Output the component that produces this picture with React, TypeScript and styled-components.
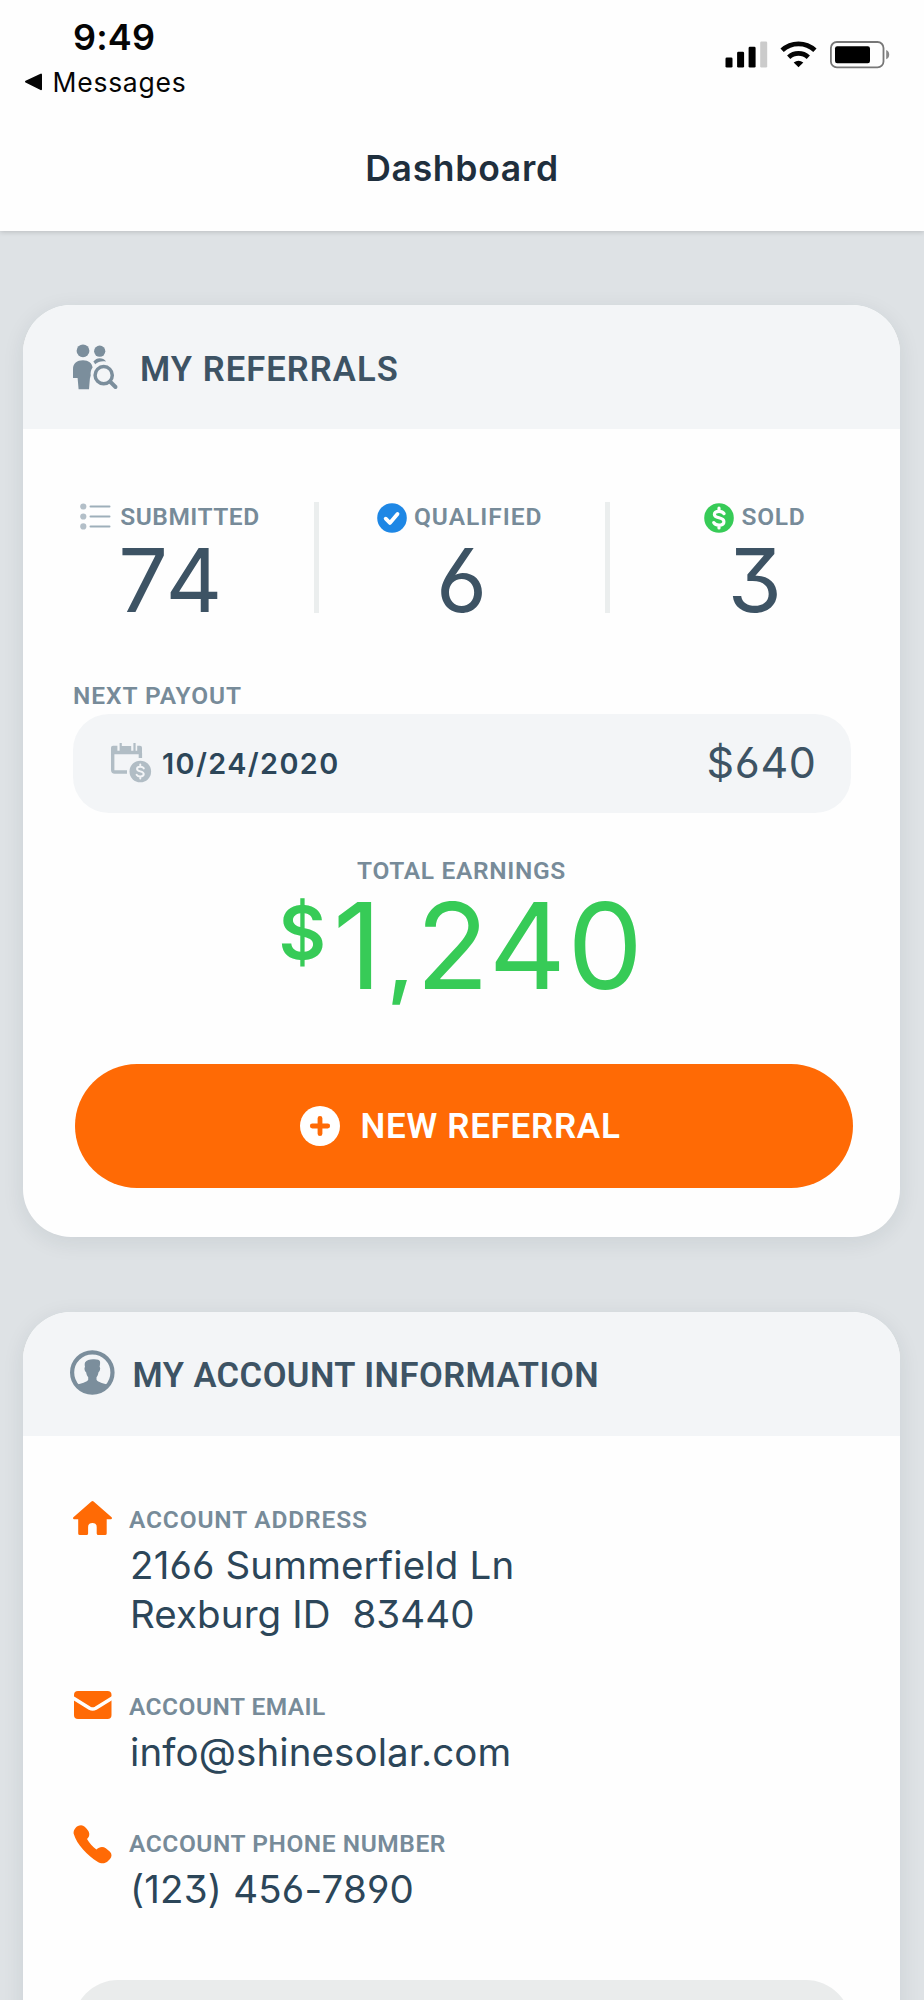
import React from "react";
import styled, { createGlobalStyle } from "styled-components";

const color = {
  page: "#dee2e5",
  panel: "#f3f5f7",
  ink: "#3d5364",
  value: "#2c4659",
  label: "#778b99",
  muted: "#b1bdc5",
  green: "#37cb57",
  blue: "#1e87e5",
  orange: "#ff6a05",
};

const GlobalStyle = createGlobalStyle`
  *, *::before, *::after { box-sizing: border-box; }
  html, body { margin: 0; background: ${color.page}; }
  svg { display: block; flex: none; overflow: visible; }
`;

const Screen = styled.div`
  width: 924px;
  height: 2000px;
  overflow: hidden;
  background: ${color.page};
  font-family: Inter, "Liberation Sans", sans-serif;
  font-feature-settings: "cv09", "cv03", "cv04";
  white-space: nowrap;
`;

const Header = styled.header`
  height: 231px;
  background: #fefefe;
  box-shadow: 0 1px 5px rgba(0, 0, 0, 0.17);
  font-feature-settings: normal;
`;

const StatusBar = styled.div`
  display: flex;
  justify-content: space-between;
  height: 144px;
  padding: 14.5px 34px 0 24px;
  color: #050505;
`;

const Time = styled.div`
  padding-left: 49px;
  font-size: 36px;
  font-weight: 600;
  line-height: 44px;
  letter-spacing: 0.17px;
`;

const BackLink = styled.div`
  display: flex;
  align-items: center;
  gap: 8.5px;
  margin-top: 8.5px;
  font-size: 26.5px;
  line-height: 30px;
  letter-spacing: 0.75px;
`;

const Indicators = styled.div`
  display: flex;
  align-items: flex-start;
  gap: 13px;
  padding-top: 26.5px;
`;

const PageTitle = styled.h1`
  margin: 0;
  color: #1f2f3d;
  font-size: 35.5px;
  font-weight: 600;
  line-height: 50px;
  letter-spacing: 0.7px;
  text-align: center;
`;

const Card = styled.section<{ $top: number }>`
  display: flow-root;
  margin: ${(p) => p.$top}px 24px 0 23px;
  border-radius: 48px;
  background: #fefefe;
  box-shadow: 0 5px 22px rgba(20, 40, 50, 0.09);
`;

const CardHeader = styled.div<{ $left: number; $gap: number }>`
  display: flex;
  align-items: center;
  gap: ${(p) => p.$gap}px;
  height: 124px;
  padding-left: ${(p) => p.$left}px;
  border-radius: 48px 48px 0 0;
  background: ${color.panel};
`;

const CardTitle = styled.h2<{ $spacing: number; $drop: number }>`
  margin: 0;
  padding-top: ${(p) => p.$drop}px;
  color: ${color.ink};
  font-family: Roboto, sans-serif;
  font-size: 34.5px;
  font-weight: 560;
  line-height: 40px;
  letter-spacing: ${(p) => p.$spacing}px;
`;

const Label = styled.div<{ $spacing: number }>`
  color: ${color.label};
  font-family: Roboto, sans-serif;
  font-size: 24.5px;
  font-weight: 560;
  line-height: 24px;
  letter-spacing: ${(p) => p.$spacing}px;
`;

const Stats = styled.div`
  display: grid;
  grid-template-columns: 291px 5px 286px 5px 1fr;
  height: 182.5px;
  padding-top: 72.5px;
`;

const Divider = styled.div`
  background: #ebeeee;
`;

const Stat = styled.div`
  display: flex;
  flex-direction: column;
  align-items: center;
`;

const StatLabel = styled.div<{ $gap: number; $start?: number; $end?: number }>`
  display: flex;
  align-items: center;
  gap: ${(p) => p.$gap}px;
  height: 30px;
  padding-left: ${(p) => p.$start ?? 0}px;
  padding-right: ${(p) => p.$end ?? 0}px;
`;

const StatValue = styled.div<{ $start?: number }>`
  margin-top: 15.5px;
  padding-left: ${(p) => p.$start ?? 2}px;
  color: ${color.ink};
  font-size: 88px;
  line-height: 66px;
  letter-spacing: 2.6px;
`;

const PayoutSection = styled.div`
  padding: 72px 49.5px 0 50px;
`;

const PayoutPill = styled.div`
  display: flex;
  align-items: center;
  height: 99px;
  margin-top: 6.5px;
  padding: 0 34px 0 38px;
  border-radius: 36px;
  background: ${color.panel};
`;

const PayoutDate = styled.div`
  margin-left: 10px;
  color: ${color.value};
  font-size: 28.8px;
  font-weight: 600;
  line-height: 36px;
  letter-spacing: 1.4px;
`;

const PayoutAmount = styled.div`
  margin: 0 0 3px auto;
  color: ${color.ink};
  font-size: 43px;
  line-height: 50px;
  letter-spacing: 0.6px;
`;

const Earnings = styled.div`
  display: flex;
  flex-direction: column;
  align-items: center;
  padding-top: 45.5px;
`;

const Total = styled.div`
  display: flex;
  align-items: baseline;
  margin: 13.5px 0 0;
  color: ${color.green};
  font-size: 119.5px;
  line-height: 100px;
  letter-spacing: 1.6px;
`;

const Currency = styled.span`
  align-self: flex-start;
  margin-right: 7px;
  font-size: 73px;
  font-weight: 600;
  line-height: 73px;
  letter-spacing: 0;
`;

const Separator = styled.span`
  margin: 0 2px 0 4px;
  font-size: 84px;
  font-weight: 600;
  line-height: 60px;
  letter-spacing: 0;
`;

const PrimaryButton = styled.button`
  display: flex;
  align-items: center;
  justify-content: center;
  gap: 20px;
  width: 778px;
  height: 123.5px;
  margin: 68px 0 49px 52px;
  padding: 0 7px 0 0;
  border: 0;
  border-radius: 62px;
  background: ${color.orange};
  color: #fff;
  font-family: Roboto, sans-serif;
  font-size: 35px;
  font-weight: 600;
  letter-spacing: 0.7px;
`;

const ButtonText = styled.span`
  padding-top: 2px;
`;

const Contacts = styled.div`
  display: flex;
  flex-direction: column;
  gap: 55px;
  padding: 71.5px 49.5px 0 50px;
`;

const Contact = styled.div`
  display: flex;
`;

const IconSlot = styled.div`
  display: flex;
  align-items: center;
  width: 56px;
  height: 24px;
`;

const ContactValue = styled.div<{ $spacing: number }>`
  margin-top: 9px;
  padding-left: 1px;
  color: ${color.value};
  font-size: 38.5px;
  line-height: 49.5px;
  letter-spacing: ${(p) => p.$spacing}px;
  white-space: pre;

  & + & { margin-top: 0; }
`;

const SecondaryButton = styled.div`
  height: 123px;
  margin: 65px 49.5px 0 50px;
  border-radius: 45px;
  background: #eaecec;
`;

const BackArrow = () => (
  <svg width="20" height="20" viewBox="0 0 20 20">
    <path d="M2 9.7 17 2.6v14.6z" fill="#050505" stroke="#050505" strokeWidth="2" strokeLinejoin="round" />
  </svg>
);

const SignalIcon = () => (
  <svg width="42" height="26" viewBox="0.5 -0.5 42 26">
    <rect x="0" y="16" width="7" height="10" rx="1.3" />
    <rect x="11.6" y="10.3" width="7" height="15.7" rx="1.3" />
    <rect x="23.1" y="5.3" width="7" height="20.7" rx="1.3" />
    <rect x="34.7" y="0" width="7" height="26" rx="1.3" fill="#cbcbcb" />
  </svg>
);

const WifiIcon = () => (
  <svg width="36" height="26" viewBox="0.5 0 36 26">
    <g fill="none" stroke="#050505" strokeWidth="4.8">
      <path d="M1.6 9.3a24 24 0 0 1 32.8 0" />
      <path d="M8.2 16.3a14.4 14.4 0 0 1 19.6 0" />
    </g>
    <path d="M13.2 21.5q4.8-3.6 9.6 0L18 26.2z" />
  </svg>
);

const BatteryIcon = () => (
  <svg width="60" height="27" viewBox="0 0 60 27">
    <rect x="0.9" y="1" width="52.6" height="25.4" rx="6" fill="none" stroke="#777" strokeWidth="1.8" />
    <rect x="5" y="5.3" width="35" height="17" rx="2.2" />
    <path d="M56.2 9q3 1 3 4.6t-3 4.6z" fill="#888" />
  </svg>
);

const ReferralsIcon = () => (
  <svg width="45" height="45" viewBox="0 0.5 45 45" fill="#7b8e9c">
    <circle cx="10" cy="6.3" r="6.4" />
    <circle cx="26.7" cy="6.7" r="5.6" />
    <path d="M10 15.7c5.6 0 9 3 9.6 7.300-1.700 2.300-2.300 5-1.900 8l-.8 3-.9 10.700H5.600L4.600 33.500H0V24.500c0-5.500 4-8.800 10-8.800z" />
    <path d="M20.300 17.300c1.800-2.500 4-3.600 6.400-3.600 2.600 0 4.800 1.100 6.400 3.300-4.400-.7-8 .1-11 2.700-.4-1-1-1.700-1.800-2.400z" />
    <circle cx="30.700" cy="30.700" r="8.600" fill="none" stroke="#7b8e9c" strokeWidth="3.500" />
    <path d="m37.500 37.500 5 5" stroke="#7b8e9c" strokeWidth="3.900" strokeLinecap="round" />
  </svg>
);

const ListIcon = () => (
  <svg width="30" height="27" viewBox="0 0 30 27">
    {[3.5, 13.5, 23.4].map((y) => (
      <g key={y}>
        <circle cx="3.3" cy={y} r="3.1" fill="#b3bfc8" />
        <path d={`M10.500 ${y}H29.500`} stroke="#9eafba" strokeWidth="2" strokeLinecap="round" />
      </g>
    ))}
  </svg>
);

const CheckIcon = () => (
  <svg width="30" height="27" viewBox="0 0 30 27">
    <circle cx="15" cy="15" r="14.8" fill={color.blue} />
    <path d="m8.700 15.700 4.200 4.200 7.600-9" fill="none" stroke="#fff" strokeWidth="3.800" strokeLinecap="round" strokeLinejoin="round" />
  </svg>
);

const coinMark =
  "M20 10.600C19 8.900 17.200 8.300 15 8.300c-2.900 0-4.600 1.300-4.600 3.100 0 2 1.900 2.700 4.600 3.400 2.900.7 4.900 1.700 4.900 3.900 0 2.100-2 3.400-4.900 3.400-2.500 0-4.200-.9-5.200-2.500M15 5.200v3M15 22v3";

const CoinIcon = () => (
  <svg width="30" height="27" viewBox="0 0 30 27">
    <circle cx="15" cy="15" r="14.8" fill={color.green} />
    <path d={coinMark} fill="none" stroke="#fff" strokeWidth="3.200" strokeLinecap="round" />
  </svg>
);

const CalendarIcon = () => (
  <svg width="41" height="41" viewBox="0 0 41 41">
    <path d="M1.700 10v17q0 2 2 2h12.300M29.400 10v5" fill="none" stroke={color.muted} strokeWidth="3.400" />
    <path d="M2 2.800h4.400v5h2.200V0h2.200v3h9.400v4.800h2.200V0h2.200v7.800h1.600v-5H29q2 0 2 2v6.400H0V4.800q0-2 2-2z" fill={color.muted} />
    <circle cx="29.300" cy="28.500" r="10.800" fill={color.muted} />
    <g transform="translate(18.700 17.900) scale(.705)">
      <path d={coinMark} fill="none" stroke={color.panel} strokeWidth="2.800" strokeLinecap="round" />
    </g>
  </svg>
);

const PlusIcon = () => (
  <svg width="40" height="40" viewBox="0 0 40 40">
    <circle cx="20" cy="20" r="20" fill="#fff" />
    <path d="M20 12.300v15.400M12.300 20h15.400" stroke={color.orange} strokeWidth="4.800" strokeLinecap="round" />
  </svg>
);

const AccountIcon = () => (
  <svg width="45" height="42" viewBox="0 0 45 42" fill="#7b8e9c">
    <g transform="translate(0 -3)">
      <circle cx="22.300" cy="22.500" r="20.200" fill="none" stroke="#7b8e9c" strokeWidth="4.200" />
      <path d="M15 12.500c1.500-2.300 4.500-3 8-3.200 4-.2 6.600.6 7 2.200.3 2-.1 3.800-.4 5.600 1.200.4.300 4.700-1.100 5.200-.4 2.400-1 3.800-2 4.900v2.600c1.600 2.700 6.700 3.300 11.500 5.200a20 20 0 0 1-31.400 0c4.800-1.900 10-2.500 11.600-5.200v-2.600c-1-1.100-1.700-2.500-2.100-4.900-1.400-.5-2.200-4.800-1-5.200-.4-1.600-.6-3-.1-4.600z" />
    </g>
  </svg>
);

const HomeIcon = () => (
  <svg width="40" height="42" viewBox="0 0.500 40 42">
    <path
      d="M18.400 3q1.100-.9 2.200 0L38.600 18.800q1 1.100-.5 1.900h-4.400v14.200q0 1.600-1.600 1.600h-6.800q-1.600 0-1.600-1.600v-6.300q0-4.200-4.300-4.200t-4.300 4.200v6.300q0 1.600-1.600 1.600H6.800q-1.600 0-1.600-1.600V20.700H.9q-1.500-.8-.5-1.900z"
      fill={color.orange}
    />
  </svg>
);

const MailIcon = () => (
  <svg width="40" height="42" viewBox="0 1 40 42">
    <rect x="1" y="6" width="37.500" height="28" rx="4" fill={color.orange} />
    <path d="m-1 12.300 17.700 10.900q3 1.700 6 0L40.500 12.300" fill="none" stroke="#fefefe" strokeWidth="3.600" />
  </svg>
);

const PhoneIcon = () => (
  <svg width="40" height="42" viewBox="0 1 40 42">
    <path
      d="M.6 11.500C.3 7.500 3.500 3.200 8.100 3.200c2.900 0 4.500 2.300 6.700 5 2.200 2.800 2 6.300-.8 8.800 2.500 4 5.500 7.500 9.400 10.600 2.600-3 6.600-3.600 9.400-1.400l4.200 3.600c2 2 2 5 0 7.200l-2.500 2.600C32 41.800 28 42 24.500 39.800 14.500 33.500 4 23 .6 11.500z"
      fill={color.orange}
    />
  </svg>
);

export default function App() {
  return (
    <Screen>
      <GlobalStyle />
      <Header>
        <StatusBar>
          <div>
            <Time>9:49</Time>
            <BackLink>
              <BackArrow />
              Messages
            </BackLink>
          </div>
          <Indicators>
            <SignalIcon />
            <WifiIcon />
            <BatteryIcon />
          </Indicators>
        </StatusBar>
        <PageTitle>Dashboard</PageTitle>
      </Header>

      <Card $top={74}>
        <CardHeader $left={50} $gap={22}>
          <ReferralsIcon />
          <CardTitle $spacing={1.08} $drop={4}>MY REFERRALS</CardTitle>
        </CardHeader>
        <Stats>
          <Stat>
            <StatLabel $gap={10} $start={3}>
              <ListIcon />
              <Label $spacing={0.5}>SUBMITTED</Label>
            </StatLabel>
            <StatValue $start={6}>74</StatValue>
          </Stat>
          <Divider />
          <Stat>
            <StatLabel $gap={6.5} $end={4}>
              <CheckIcon />
              <Label $spacing={1}>QUALIFIED</Label>
            </StatLabel>
            <StatValue>6</StatValue>
          </Stat>
          <Divider />
          <Stat>
            <StatLabel $gap={7.5} $end={0.5}>
              <CoinIcon />
              <Label $spacing={0.7}>SOLD</Label>
            </StatLabel>
            <StatValue>3</StatValue>
          </Stat>
        </Stats>
        <PayoutSection>
          <Label $spacing={0.95}>NEXT PAYOUT</Label>
          <PayoutPill>
            <CalendarIcon />
            <PayoutDate>10/24/2020</PayoutDate>
            <PayoutAmount>$640</PayoutAmount>
          </PayoutPill>
        </PayoutSection>
        <Earnings>
          <Label $spacing={0.66}>TOTAL EARNINGS</Label>
          <Total>
            <Currency>$</Currency>
            <span>1</span>
            <Separator>,</Separator>
            <span>240</span>
          </Total>
        </Earnings>
        <PrimaryButton>
          <PlusIcon />
          <ButtonText>NEW REFERRAL</ButtonText>
        </PrimaryButton>
      </Card>

      <Card $top={75.5}>
        <CardHeader $left={47} $gap={17.5}>
          <AccountIcon />
          <CardTitle $spacing={0.46} $drop={1}>MY ACCOUNT INFORMATION</CardTitle>
        </CardHeader>
        <Contacts>
          <Contact>
            <IconSlot><HomeIcon /></IconSlot>
            <div>
              <Label $spacing={0.83}>ACCOUNT ADDRESS</Label>
              <ContactValue $spacing={0.15}>2166 Summerfield Ln</ContactValue>
              <ContactValue $spacing={0.1}>{"Rexburg ID  83440"}</ContactValue>
            </div>
          </Contact>
          <Contact>
            <IconSlot><MailIcon /></IconSlot>
            <div>
              <Label $spacing={0.46}>ACCOUNT EMAIL</Label>
              <ContactValue $spacing={0.1}>info@shinesolar.com</ContactValue>
            </div>
          </Contact>
          <Contact>
            <IconSlot><PhoneIcon /></IconSlot>
            <div>
              <Label $spacing={0.56}>ACCOUNT PHONE NUMBER</Label>
              <ContactValue $spacing={0.2}>(123) 456-7890</ContactValue>
            </div>
          </Contact>
        </Contacts>
        <SecondaryButton />
      </Card>
    </Screen>
  );
}
